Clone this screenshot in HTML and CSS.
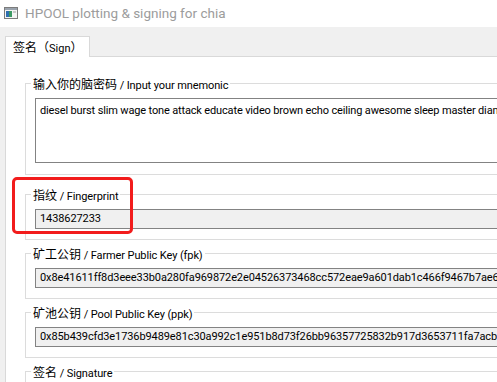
FILE: index.html
```html
<!DOCTYPE html>
<html lang="zh">
<head>
<meta charset="utf-8">
<title>HPOOL plotting &amp; signing for chia</title>
<link rel="stylesheet" href="styles.css">
</head>
<body>
<div class="window">
  <header class="titlebar">
    <svg class="app-icon" width="14" height="12" viewBox="0 0 14 12">
      <rect x="0.5" y="0.5" width="13" height="11" fill="#f4f4f4" stroke="#7c7c7c"/>
      <rect x="1" y="1" width="12" height="2" fill="#9aa3ad"/>
      <rect x="2" y="4" width="3" height="6" fill="#2f6fb0"/>
      <rect x="5" y="4" width="3" height="6" fill="#3c9a63"/>
      <rect x="9" y="4" width="3" height="2" fill="#c8c8c8"/>
    </svg>
    <span class="title">HPOOL plotting &amp; signing for chia</span>
  </header>
  <div class="body">
    <nav class="tabbar">
      <div class="tab"><span class="zh">签名（</span>Sign<span class="zh">）</span></div>
    </nav>
    <main class="pane">
      <section class="group group-first">
        <div class="group-title"><span class="zh">输入你的脑密码</span> / Input your mnemonic</div>
        <div class="textbox">diesel burst slim wage tone attack educate video brown echo ceiling awesome sleep master diamond</div>
      </section>
      <section class="group">
        <div class="group-title"><span class="zh">指纹</span> / Fingerprint</div>
        <div class="field">1438627233</div>
      </section>
      <section class="group">
        <div class="group-title"><span class="zh">矿工公钥</span> / Farmer Public Key (fpk)</div>
        <div class="field">0x8e41611ff8d3eee33b0a280fa969872e2e04526373468cc572eae9a601dab1c466f9467b7ae6</div>
      </section>
      <section class="group">
        <div class="group-title"><span class="zh">矿池公钥</span> / Pool Public Key (ppk)</div>
        <div class="field">0x85b439cfd3e1736b9489e81c30a992c1e951b8d73f26bb96357725832b917d3653711fa7acb6</div>
      </section>
      <section class="group">
        <div class="group-title"><span class="zh">签名</span> / Signature</div>
        <div class="field"></div>
      </section>
    </main>
  </div>
  <div class="highlight"></div>
</div>
</body>
</html>
```
FILE: styles.css
```css
html, body {
  margin: 0;
  padding: 0;
}
body {
  width: 497px;
  height: 382px;
  overflow: hidden;
  background: #f0f0f0;
  font-family: Roboto, "Noto Sans CJK SC", sans-serif;
  font-size: 11px;
  color: #000;
}
.window {
  position: relative;
  width: 497px;
  height: 382px;
  overflow: hidden;
}
.zh {
  font-family: "Noto Sans CJK SC", sans-serif;
  font-size: 12px;
  letter-spacing: 0;
}
.titlebar {
  height: 27px;
  background: #fff;
  display: flex;
  align-items: center;
  padding-left: 4px;
  gap: 7px;
}
.app-icon {
  flex: none;
  margin-top: -2px;
}
.title {
  font-size: 13.5px;
  color: #9c9c9c;
  white-space: nowrap;
  margin-top: -2px;
}
.body {
  padding: 9px 0 0 5px;
}
.tabbar {
  display: flex;
}
.tab {
  position: relative;
  z-index: 1;
  width: 76px;
  height: 20px;
  padding-left: 7px;
  border: 1px solid #d9d9d9;
  border-bottom: none;
  background: #fff;
  margin-bottom: -1px;
  line-height: 20px;
  white-space: nowrap;
}
.pane {
  width: 700px;
  height: 400px;
  background: #fff;
  border-top: 1px solid #d9d9d9;
  border-left: 1px solid #d9d9d9;
  padding: 26px 0 0 19px;
}
.group {
  width: 620px;
  border: 1px solid #dcdcdc;
  padding: 0 0 10px 9px;
  margin-bottom: 13px;
}
.group-first {
  padding-bottom: 11px;
  margin-bottom: 19px;
}
.group-title {
  width: fit-content;
  margin: -8px 0 0 -4px;
  padding: 0 2px;
  height: 16px;
  line-height: 16px;
  background: #fff;
  white-space: nowrap;
  letter-spacing: -0.1px;
}
.textbox {
  margin-top: 6px;
  height: 60px;
  border: 1px solid #838383;
  background: #fff;
  padding: 3px 4px 0;
  line-height: 18px;
  white-space: nowrap;
  overflow: hidden;
  letter-spacing: -0.15px;
}
.field {
  margin-top: 6px;
  height: 18px;
  border: 1px solid #838383;
  background: #f0f0f0;
  padding: 0 4px;
  line-height: 18px;
  white-space: nowrap;
  overflow: hidden;
  letter-spacing: -0.1px;
}
.highlight {
  position: absolute;
  left: 12px;
  top: 177px;
  width: 115px;
  height: 51px;
  border: 3px solid #f21c1c;
  border-radius: 5px;
}
```
